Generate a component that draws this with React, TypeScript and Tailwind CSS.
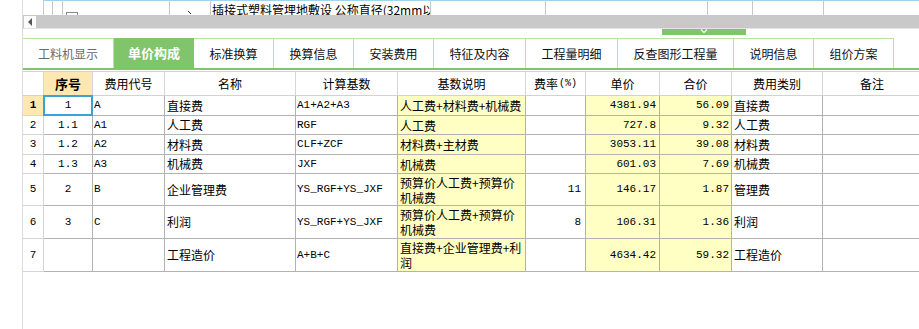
const cjk = "font-['Noto_Sans_CJK_SC',sans-serif]"
const mono = "font-['Liberation_Mono',monospace]"

const tabs = [
    { label: "工料机显示", w: "w-[91px]" },
    { label: "单价构成", w: "w-[80px]", active: true },
    { label: "标准换算", w: "w-[80px]" },
    { label: "换算信息", w: "w-[80px]" },
    { label: "安装费用", w: "w-[80px]" },
    { label: "特征及内容", w: "w-[92px]" },
    { label: "工程量明细", w: "w-[92px]" },
    { label: "反查图形工程量", w: "w-[116px]" },
    { label: "说明信息", w: "w-[80px]" },
    { label: "组价方案", w: "w-[80px]" },
]

const rows = [
    { rn: "1", seq: "1", code: "A", name: "直接费", base: "A1+A2+A3", desc: ["人工费+材料费+机械费"], rate: "", price: "4381.94", total: "56.09", cat: "直接费", h: "h-[20px]" },
    { rn: "2", seq: "1.1", code: "A1", name: "人工费", base: "RGF", desc: ["人工费"], rate: "", price: "727.8", total: "9.32", cat: "人工费", h: "h-[19px]" },
    { rn: "3", seq: "1.2", code: "A2", name: "材料费", base: "CLF+ZCF", desc: ["材料费+主材费"], rate: "", price: "3053.11", total: "39.08", cat: "材料费", h: "h-[20px]" },
    { rn: "4", seq: "1.3", code: "A3", name: "机械费", base: "JXF", desc: ["机械费"], rate: "", price: "601.03", total: "7.69", cat: "机械费", h: "h-[19px]" },
    { rn: "5", seq: "2", code: "B", name: "企业管理费", base: "YS_RGF+YS_JXF", desc: ["预算价人工费+预算价", "机械费"], rate: "11", price: "146.17", total: "1.87", cat: "管理费", h: "h-[32px]" },
    { rn: "6", seq: "3", code: "C", name: "利润", base: "YS_RGF+YS_JXF", desc: ["预算价人工费+预算价", "机械费"], rate: "8", price: "106.31", total: "1.36", cat: "利润", h: "h-[33px]" },
    { rn: "7", seq: "", code: "", name: "工程造价", base: "A+B+C", desc: ["直接费+企业管理费+利", "润"], rate: "", price: "4634.42", total: "59.32", cat: "工程造价", h: "h-[33px]" },
]

const cell = "shrink-0 h-full flex items-center border-r border-b border-[#b2b2b2] overflow-hidden whitespace-nowrap"
const yellow = "bg-[#ffffc4]"

function TopRow() {
    const line = "shrink-0 h-full border-r border-[#c8c8c8]"
    return (
        <div className="h-[15px] flex overflow-hidden">
            <div className={`${line} w-[21px]`} />
            <div className="flex-1 flex border-t border-[#a0d4ec]">
                <div className={`${line} w-[9px]`} />
                <div className={`${line} w-[10px]`} />
                <div className={`${line} w-[107px] pl-[3px]`}>
                    <div className="mt-[11px] w-[12px] h-[12px] border border-[#8a8a8a] bg-white" />
                </div>
                <div className={`${line} w-[41px] pl-[17px]`}>
                    <svg width="6" height="14" viewBox="0 0 6 14">
                        <path d="M1 10 L4 13" stroke="#333" strokeWidth="1" fill="none" />
                    </svg>
                </div>
                <div className={`${line} w-[220px] pl-[1px] pt-[2px] text-[12px] leading-[14px] text-black whitespace-nowrap overflow-hidden ${cjk}`}>
                    插接式塑料管埋地敷设 公称直径(32mm以
                </div>
                <div className={`${line} w-[115px]`} />
                <div className={`${line} w-[162px]`} />
                <div className={`${line} w-[45px]`} />
                <div className={`${line} w-[71px]`} />
                <div className="flex-1" />
            </div>
        </div>
    )
}

function Scrollbar() {
    return (
        <div className="h-[14px] bg-[#c9c9c9] flex items-center pl-[1px] border-b border-[#e4e4e4]">
            <div className="w-[12px] h-[12px] bg-[#fbfbfb] flex items-center justify-center">
                <div className="w-0 h-0 border-y-[4px] border-y-transparent border-r-[4px] border-r-[#555]" />
            </div>
        </div>
    )
}

function Header() {
    const hc = "shrink-0 h-full flex items-center justify-center border-r border-[#d6d6d6] text-[12px] text-black " + cjk
    return (
        <div className="h-[25px] flex border-t border-b border-[#d2d2d2]">
            <div className={`${hc} w-[21px]`} />
            <div className={`${hc} w-[49px] bg-[#fde8b4] font-bold text-[13px]`}>序号</div>
            <div className={`${hc} w-[72px]`}>费用代号</div>
            <div className={`${hc} w-[131px]`}>名称</div>
            <div className={`${hc} w-[102px]`}>计算基数</div>
            <div className={`${hc} w-[128px]`}>基数说明</div>
            <div className={`${hc} w-[60px]`}>费率<span className={`${mono} text-[10px] ml-[1px]`}>(%)</span></div>
            <div className={`${hc} w-[74px]`}>单价</div>
            <div className={`${hc} w-[72px]`}>合价</div>
            <div className={`${hc} w-[91px]`}>费用类别</div>
            <div className={`${hc} flex-1 border-r-0 pl-[2px]`}>备注</div>
        </div>
    )
}

export default function App() {
    return (
        <div className="w-[919px] h-[329px] bg-white flex overflow-hidden text-black">
            <div className="w-[22px] shrink-0" />
            <div className="flex-1 min-w-0 flex flex-col border-l border-[#dcdcdc] overflow-hidden">
                <TopRow />
                <Scrollbar />

                <div className="h-[9px] flex">
                    <div className="ml-[639px] w-[84px] h-[6px] bg-[#80c46c] flex justify-center">
                        <svg width="8" height="5" viewBox="0 0 8 5">
                            <path d="M1 0.5 L4 3.5 L7 0.5" stroke="#e8f6e2" strokeWidth="1.4" fill="none" />
                        </svg>
                    </div>
                </div>

                <div className="h-[30px] flex">
                    {tabs.map((t) => (
                        <div
                            key={t.label}
                            className={`${t.w} shrink-0 h-full flex items-center justify-center ${cjk} ${
                                t.active
                                    ? "bg-[#80c46c] text-white font-bold text-[13px]"
                                    : "border-t border-r border-[#b8e4a4] text-[12px] " + (t.label === "工料机显示" ? "text-[#6a6a6a]" : "text-[#111]")
                            }`}
                        >
                            {t.label}
                        </div>
                    ))}
                </div>
                <div className="h-[2px] bg-[#80c46c]" />

                <div className="mt-px flex flex-col">
                    <Header />
                    {rows.map((r) => (
                        <div key={r.rn} className={`${r.h} flex`}>
                            <div className={`${cell} w-[21px] justify-center border-[#d4d4d4] text-[11px] ${mono} ${r.rn === "1" ? "bg-[#fde8b4] font-bold" : ""}`}>{r.rn}</div>
                            <div className={`${cell} w-[49px] justify-center text-[11px] ${mono} relative overflow-visible`}>
                                {r.seq}
                                {r.rn === "1" && <div className="absolute -inset-px border-2 border-[#3ba2d6]" />}
                            </div>
                            <div className={`${cell} w-[72px] pl-[1px] text-[11px] ${mono}`}>{r.code}</div>
                            <div className={`${cell} w-[131px] pl-[2px] text-[12px] ${cjk}`}>{r.name}</div>
                            <div className={`${cell} w-[102px] pl-[1px] text-[11px] ${mono}`}>{r.base}</div>
                            <div className={`${cell} w-[128px] pl-[2px] text-[12px] leading-[15px] ${cjk} ${yellow}`}>
                                <div className="flex flex-col">
                                    {r.desc.map((d) => (
                                        <span key={d}>{d}</span>
                                    ))}
                                </div>
                            </div>
                            <div className={`${cell} w-[60px] justify-end pr-[4px] text-[11px] ${mono}`}>{r.rate}</div>
                            <div className={`${cell} w-[74px] justify-end pr-[3px] text-[11px] ${mono} ${yellow}`}>{r.price}</div>
                            <div className={`${cell} w-[72px] justify-end pr-[2px] text-[11px] ${mono} ${yellow}`}>{r.total}</div>
                            <div className={`${cell} w-[91px] pl-[2px] text-[12px] ${cjk}`}>{r.cat}</div>
                            <div className={`${cell} flex-1 border-r-0`} />
                        </div>
                    ))}
                </div>
            </div>
        </div>
    )
}
